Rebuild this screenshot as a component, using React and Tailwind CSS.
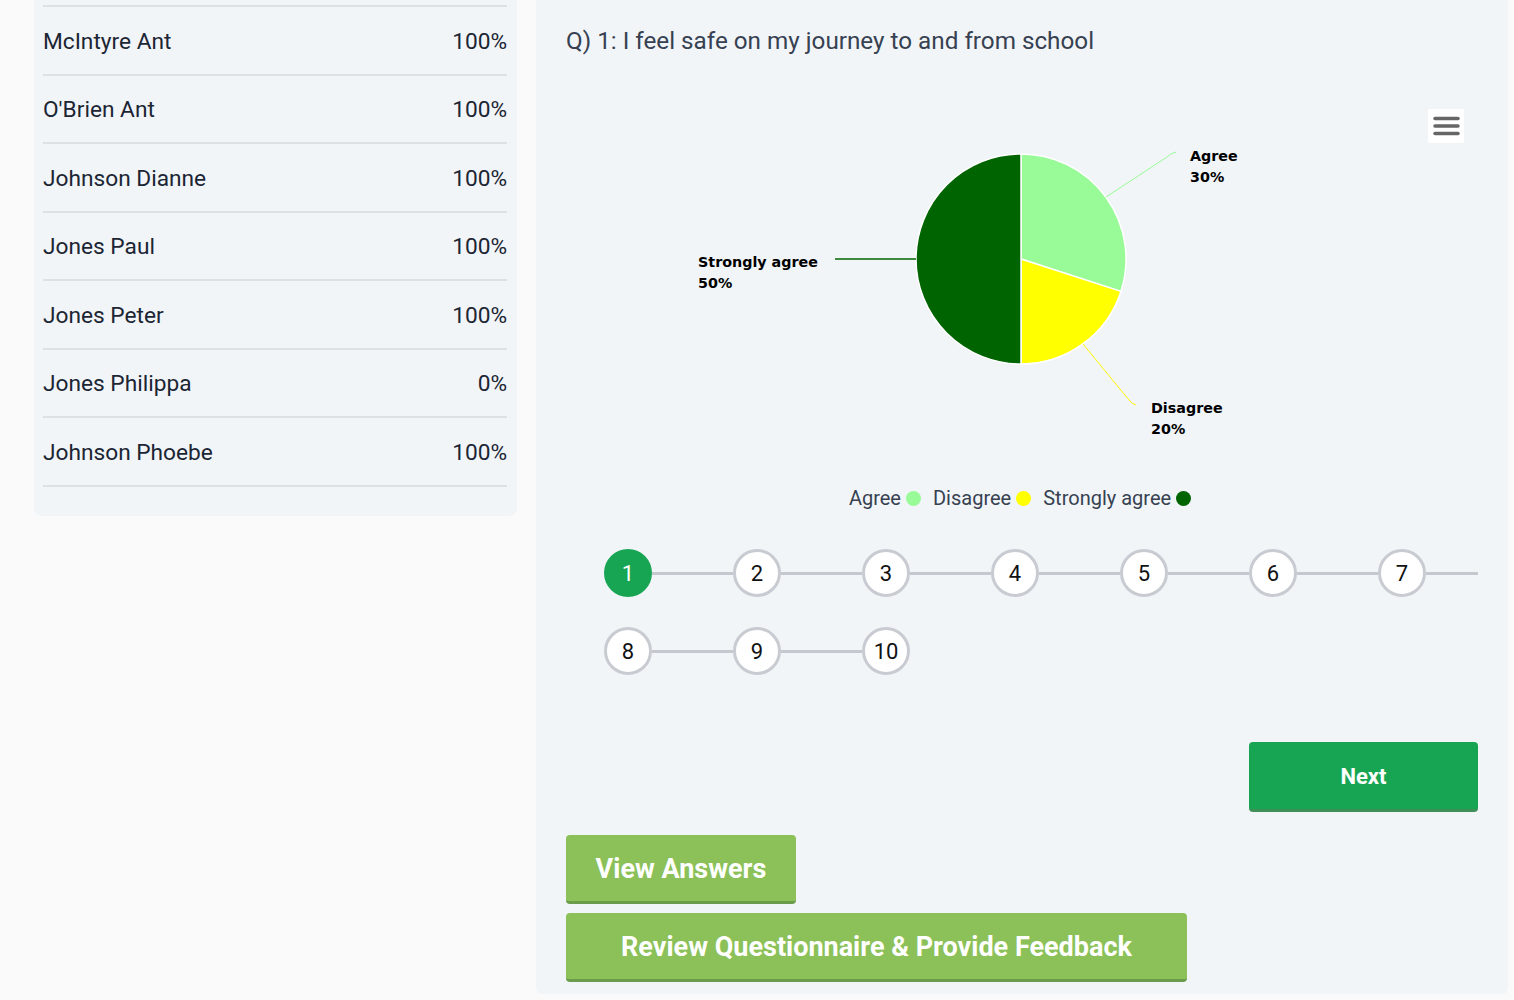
const students = [
  { name: 'McIntyre Ant', pct: '100%' },
  { name: "O'Brien Ant", pct: '100%' },
  { name: 'Johnson Dianne', pct: '100%' },
  { name: 'Jones Paul', pct: '100%' },
  { name: 'Jones Peter', pct: '100%' },
  { name: 'Jones Philippa', pct: '0%' },
  { name: 'Johnson Phoebe', pct: '100%' },
];

function PieChart() {
  return (
    <svg width="912" height="400" viewBox="0 0 912 400" className="block">
      {/* slices */}
      <path d="M455,189 L455,84 A105,105 0 0 1 554.9,221.4 Z" fill="#98fb98" stroke="#ffffff" strokeWidth="1.5" />
      <path d="M455,189 L554.9,221.4 A105,105 0 0 1 455,294 Z" fill="#ffff00" stroke="#ffffff" strokeWidth="1.5" />
      <path d="M455,189 L455,294 A105,105 0 0 1 455,84 Z" fill="#006400" stroke="#ffffff" strokeWidth="1.5" />
      {/* connectors */}
      <path d="M540,127 L601,87 Q605,83 610,82" fill="none" stroke="#98fb98" strokeWidth="1" />
      <path d="M517,274 L563,330 Q566,334 570,335" fill="none" stroke="#ffff00" strokeWidth="1" />
      <path d="M350,189 L269,189" fill="none" stroke="#006400" strokeWidth="1.5" />
      {/* labels */}
      <g fontFamily="'DejaVu Sans', sans-serif" fontSize="14.3" fontWeight="bold" fill="#000000">
        <text x="624" y="91">Agree</text>
        <text x="624" y="112">30%</text>
        <text x="585" y="343">Disagree</text>
        <text x="585" y="364">20%</text>
        <text x="132" y="197">Strongly agree</text>
        <text x="132" y="218">50%</text>
      </g>
      {/* export menu */}
      <rect x="862" y="39" width="36" height="34" rx="2" fill="#ffffff" />
      <g stroke="#666666" strokeWidth="3.5" strokeLinecap="round">
        <line x1="869" y1="48.5" x2="892" y2="48.5" />
        <line x1="869" y1="56" x2="892" y2="56" />
        <line x1="869" y1="63.5" x2="892" y2="63.5" />
      </g>
    </svg>
  );
}

function Step({ n, active }) {
  return (
    <div
      className={
        active
          ? 'w-[48px] h-[48px] shrink-0 rounded-full bg-[#18a553] text-white flex items-center justify-center text-[22px]'
          : 'w-[48px] h-[48px] shrink-0 rounded-full bg-white border-[3px] border-[#c8ccd2] text-[#111111] flex items-center justify-center text-[22px]'
      }
    >
      {n}
    </div>
  );
}

function Line({ grow }) {
  return <div className={grow ? 'flex-1 h-[3px] bg-[#c5c9cf]' : 'w-[81px] shrink-0 h-[3px] bg-[#c5c9cf]'} />;
}

export default function App() {
  return (
    <div className="min-h-[1000px] bg-[#fafafa] flex items-start gap-[19px] pl-[34px] font-['Roboto',sans-serif]">
      {/* student list */}
      <div className="w-[483px] shrink-0 bg-[#f1f5f8] rounded-b-lg pl-[9px] pr-[10px] pt-[5px] pb-[29px]">
        <div className="border-t-2 border-[#dde0e4]" />
        {students.map((s) => (
          <div
            key={s.name}
            className="h-[68.5px] border-b-2 border-[#dde0e4] flex items-center justify-between pt-[3px] text-[22.7px] text-[#1c2533]"
          >
            <span>{s.name}</span>
            <span>{s.pct}</span>
          </div>
        ))}
      </div>

      {/* question panel */}
      <div className="w-[972px] shrink-0 h-[994px] bg-[#f1f5f8] rounded-b-md pl-[30px] pr-[30px] pt-[26px] pb-[12px] flex flex-col">
        <h2 className="text-[24.25px] leading-[30px] text-[#374151]">Q) 1: I feel safe on my journey to and from school</h2>

        <div className="mt-[14px]">
          <PieChart />
        </div>

        {/* legend */}
        <div className="mt-[16px] flex justify-center items-center gap-[12px] pr-[4px] text-[20px] leading-[24px] text-[#374151]">
          <div className="flex items-center gap-[5px]">
            <span>Agree</span>
            <span className="w-[15px] h-[15px] rounded-full bg-[#98fb98]" />
          </div>
          <div className="flex items-center gap-[5px]">
            <span>Disagree</span>
            <span className="w-[15px] h-[15px] rounded-full bg-[#ffff00]" />
          </div>
          <div className="flex items-center gap-[5px]">
            <span>Strongly agree</span>
            <span className="w-[15px] h-[15px] rounded-full bg-[#006400]" />
          </div>
        </div>

        {/* stepper */}
        <div className="mt-[39px] pl-[38px] flex flex-col gap-[30px]">
          <div className="flex items-center">
            <Step n={1} active />
            <Line />
            <Step n={2} />
            <Line />
            <Step n={3} />
            <Line />
            <Step n={4} />
            <Line />
            <Step n={5} />
            <Line />
            <Step n={6} />
            <Line />
            <Step n={7} />
            <Line grow />
          </div>
          <div className="flex items-center">
            <Step n={8} />
            <Line />
            <Step n={9} />
            <Line />
            <Step n={10} />
          </div>
        </div>

        <div className="mt-[67px] flex justify-end">
          <button className="w-[229px] h-[70px] rounded-[4px] bg-[#18a553] border-b-[3px] border-[#3f8f58] pt-[2px] text-white font-bold text-[22px]">
            Next
          </button>
        </div>

        <div className="mt-[23px] flex flex-col items-start gap-[9px]">
          <button className="w-[230px] h-[69px] rounded-[4px] bg-[#8bc158] border-b-[3px] border-[#6a9c4c] pt-[3px] text-white font-bold text-[27px]">
            View Answers
          </button>
          <button className="w-[621px] h-[69px] rounded-[4px] bg-[#8bc158] border-b-[3px] border-[#6a9c4c] pt-[3px] text-white font-bold text-[27px]">
            Review Questionnaire &amp; Provide Feedback
          </button>
        </div>
      </div>
    </div>
  );
}
